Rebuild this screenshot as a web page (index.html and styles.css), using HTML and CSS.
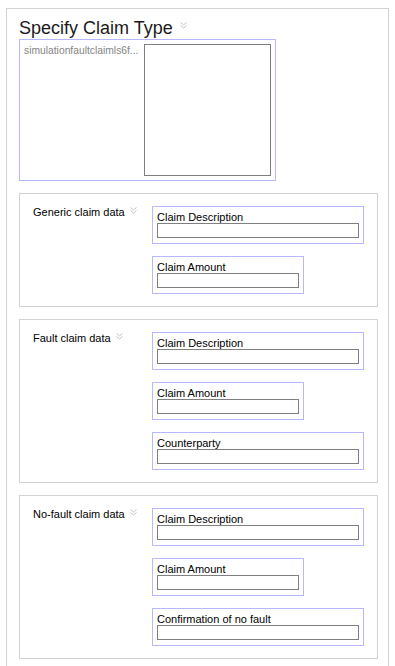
FILE: index.html
```html
<!DOCTYPE html>
<html lang="en">
  <head>
    <meta charset="UTF-8" />
    <meta name="viewport" content="width=device-width, initial-scale=1.0" />
    <title>Specify Claim Type</title>
    <link rel="stylesheet" href="styles.css">
  </head>
  <body>
    <div class="frame">
      <h1 class="title">Specify Claim Type<svg class="chev chev-title" width="7" height="7" viewBox="0 0 7 7"><polyline points="0.5,0.5 3.5,3 6.5,0.5" /><polyline points="0.5,3.5 3.5,6 6.5,3.5" /></svg></h1>

      <div class="type-box">
        <div class="type-name">simulationfaultclaimls6f...</div>
        <div class="listbox"></div>
      </div>

      <!-- Generic claim -->
      <div class="section">
        <div class="section-label">Generic claim data<svg class="chev" width="7" height="7" viewBox="0 0 7 7"><polyline points="0.5,0.5 3.5,3 6.5,0.5" /><polyline points="0.5,3.5 3.5,6 6.5,3.5" /></svg></div>
        <div class="fields">
          <div class="field wide"><label>Claim Description</label><input type="text" /></div>
          <div class="field narrow"><label>Claim Amount</label><input type="text" /></div>
        </div>
      </div>

      <!-- Fault claim -->
      <div class="section">
        <div class="section-label">Fault claim data<svg class="chev" width="7" height="7" viewBox="0 0 7 7"><polyline points="0.5,0.5 3.5,3 6.5,0.5" /><polyline points="0.5,3.5 3.5,6 6.5,3.5" /></svg></div>
        <div class="fields">
          <div class="field wide"><label>Claim Description</label><input type="text" /></div>
          <div class="field narrow"><label>Claim Amount</label><input type="text" /></div>
          <div class="field wide"><label>Counterparty</label><input type="text" /></div>
        </div>
      </div>

      <!-- No-fault claim -->
      <div class="section">
        <div class="section-label">No-fault claim data<svg class="chev" width="7" height="7" viewBox="0 0 7 7"><polyline points="0.5,0.5 3.5,3 6.5,0.5" /><polyline points="0.5,3.5 3.5,6 6.5,3.5" /></svg></div>
        <div class="fields">
          <div class="field wide"><label>Claim Description</label><input type="text" /></div>
          <div class="field narrow"><label>Claim Amount</label><input type="text" /></div>
          <div class="field wide"><label>Confirmation of no fault</label><input type="text" /></div>
        </div>
      </div>
    </div>
  </body>
</html>
```

FILE: styles.css
```css
body {
  margin: 8px 6px 0;
  font-family: "Liberation Sans", Arial, sans-serif;
  font-size: 11px;
  color: #000;
  background-color: #fff;
}
.frame {
  border: 1px solid #d2d2d2;
  padding: 0 10px 12px 12px;
}
.title {
  margin: 0;
  padding-top: 9px;
  font-size: 18px;
  font-weight: normal;
  line-height: 21px;
  color: #1a1a1a;
  white-space: nowrap;
}
.chev {
  display: inline-block;
  vertical-align: top;
  margin: 1px 0 0 5px;
  fill: none;
  stroke: #c4c4c4;
  stroke-width: 1;
}
.chev-title {
  margin: 4px 0 0 7px;
}
.type-box {
  display: flex;
  box-sizing: border-box;
  width: 257px;
  height: 142px;
  padding: 4px;
  border: 1px solid #b8b8ff;
}
.type-name {
  width: 120px;
  color: #858585;
  font-size: 10.3px;
  line-height: 13px;
  white-space: nowrap;
}
.listbox {
  box-sizing: border-box;
  width: 127px;
  height: 132px;
  border: 1px solid #7f7f7f;
}
.section {
  display: flex;
  margin-top: 12px;
  padding: 12px 13px;
  border: 1px solid #d2d2d2;
}
.section-label {
  width: 119px;
  line-height: 13px;
  white-space: nowrap;
}
.fields {
  display: flex;
  flex-direction: column;
  align-items: flex-start;
  gap: 12px;
}
.field {
  display: flex;
  flex-direction: column;
  box-sizing: border-box;
  height: 38px;
  padding: 4px 4px 5px;
  border: 1px solid #b8b8ff;
}
.field.wide {
  width: 212px;
}
.field.narrow {
  width: 152px;
}
.field label {
  line-height: 12px;
  white-space: nowrap;
}
.field input {
  box-sizing: border-box;
  width: 100%;
  height: 15px;
  margin: 0;
  padding: 0;
  border: 1px solid #7f7f7f;
  background-color: #fff;
}
```
